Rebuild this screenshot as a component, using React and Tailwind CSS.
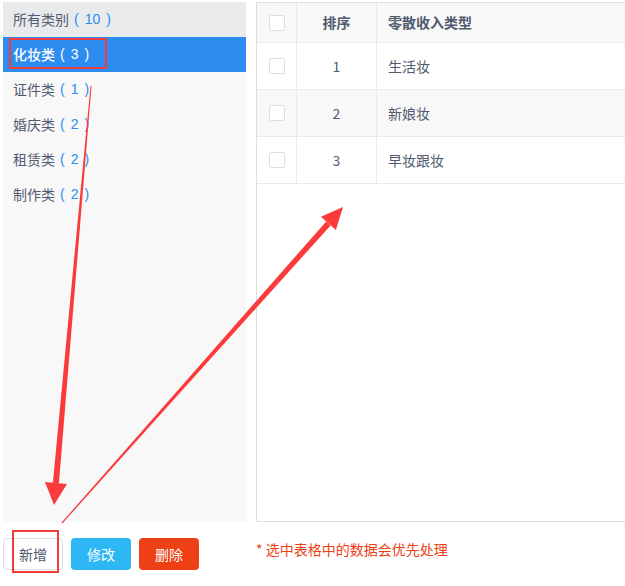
import React from "react";

const categories = [
  { name: "所有类别", count: 10, head: true },
  { name: "化妆类", count: 3, active: true },
  { name: "证件类", count: 1 },
  { name: "婚庆类", count: 2 },
  { name: "租赁类", count: 2 },
  { name: "制作类", count: 2 },
];

const rows = [
  { no: 1, name: "生活妆" },
  { no: 2, name: "新娘妆", hover: true },
  { no: 3, name: "早妆跟妆" },
];

function Checkbox() {
  return <span className="block w-4 h-4 rounded-[2px] border border-[#dcdee2] bg-white" />;
}

export default function App() {
  return (
    <div
      className="relative w-[625px] h-[586px] overflow-hidden bg-white text-[14px] text-[#515a6e]"
      style={{ fontFamily: '"Noto Sans CJK SC", "Noto Sans", sans-serif' }}
    >
      <div className="flex gap-[10px] pt-[2px] pl-[3px]">
        {/* category list */}
        <div className="w-[243px] shrink-0 h-[520px] bg-[#f8f8f9] flex flex-col">
          {categories.map((c) => (
            <div
              key={c.name}
              className={
                "h-[35px] flex items-center pl-[10px] " +
                (c.active ? "bg-[#2d8cf0] text-white font-medium" : c.head ? "bg-[#e8eaec]" : "")
              }
            >
              <span>{c.name}</span>
              <span
                className={"ml-[5px] " + (c.active ? "text-white" : "text-[#2d8cf0]")}
                style={{ fontFamily: '"Liberation Sans", sans-serif' }}
              >
                (<span className="mx-[6px]">{c.count}</span>)
              </span>
            </div>
          ))}
        </div>

        {/* table */}
        <div className="w-[420px] shrink-0 h-[520px] border border-[#dcdee2] bg-white">
          <div className="flex h-[40px] bg-[#f8f8f9] border-b border-[#e8eaec] font-bold">
            <div className="w-[40px] border-r border-[#e8eaec] flex items-center justify-center">
              <Checkbox />
            </div>
            <div className="w-[80px] border-r border-[#e8eaec] flex items-center justify-center">排序</div>
            <div className="flex-1 flex items-center pl-[11px]">零散收入类型</div>
          </div>
          {rows.map((r) => (
            <div
              key={r.no}
              className={"flex h-[47px] border-b border-[#e8eaec] " + (r.hover ? "bg-[#f8f8f9]" : "")}
            >
              <div className="w-[40px] border-r border-[#e8eaec] flex items-center justify-center">
                <Checkbox />
              </div>
              <div className="w-[80px] border-r border-[#e8eaec] flex items-center justify-center">{r.no}</div>
              <div className="flex-1 flex items-center pl-[11px]">{r.name}</div>
            </div>
          ))}
        </div>
      </div>

      {/* buttons */}
      <div className="flex items-center mt-[16px] pl-[3px]">
        <div className="w-[253px] shrink-0 flex gap-[8px]">
          <button className="w-[60px] h-[32px] rounded-[4px] border border-[#dcdee2] bg-white text-[#515a6e]">新增</button>
          <button className="w-[60px] h-[32px] rounded-[4px] bg-[#2db7f5] text-white">修改</button>
          <button className="w-[60px] h-[32px] rounded-[4px] bg-[#ed4014] text-white">删除</button>
        </div>
        <span className="text-[14px] text-[#ed4014] -mt-[10px]">* 选中表格中的数据会优先处理</span>
      </div>

      {/* annotations */}
      <svg className="absolute inset-0 pointer-events-none" width="625" height="586">
        <rect x="10" y="39" width="96" height="29" fill="none" stroke="#f03c3c" strokeWidth="2" />
        <rect x="13" y="531" width="45" height="41" fill="none" stroke="#f03c3c" strokeWidth="2" />
        <polygon fill="#fb3b3b" points="90.5,86 91.5,86 58.9,483.4 52.9,482.8" />
        <polygon fill="#fb3b3b" points="45,482 67,484 54,505" />
        <polygon fill="#fb3b3b" points="61.6,522.6 62.4,523.4 330.6,225.4 326.2,221.4" />
        <polygon fill="#fb3b3b" points="320.9,216.8 335.9,230 343,207" />
      </svg>
    </div>
  );
}
